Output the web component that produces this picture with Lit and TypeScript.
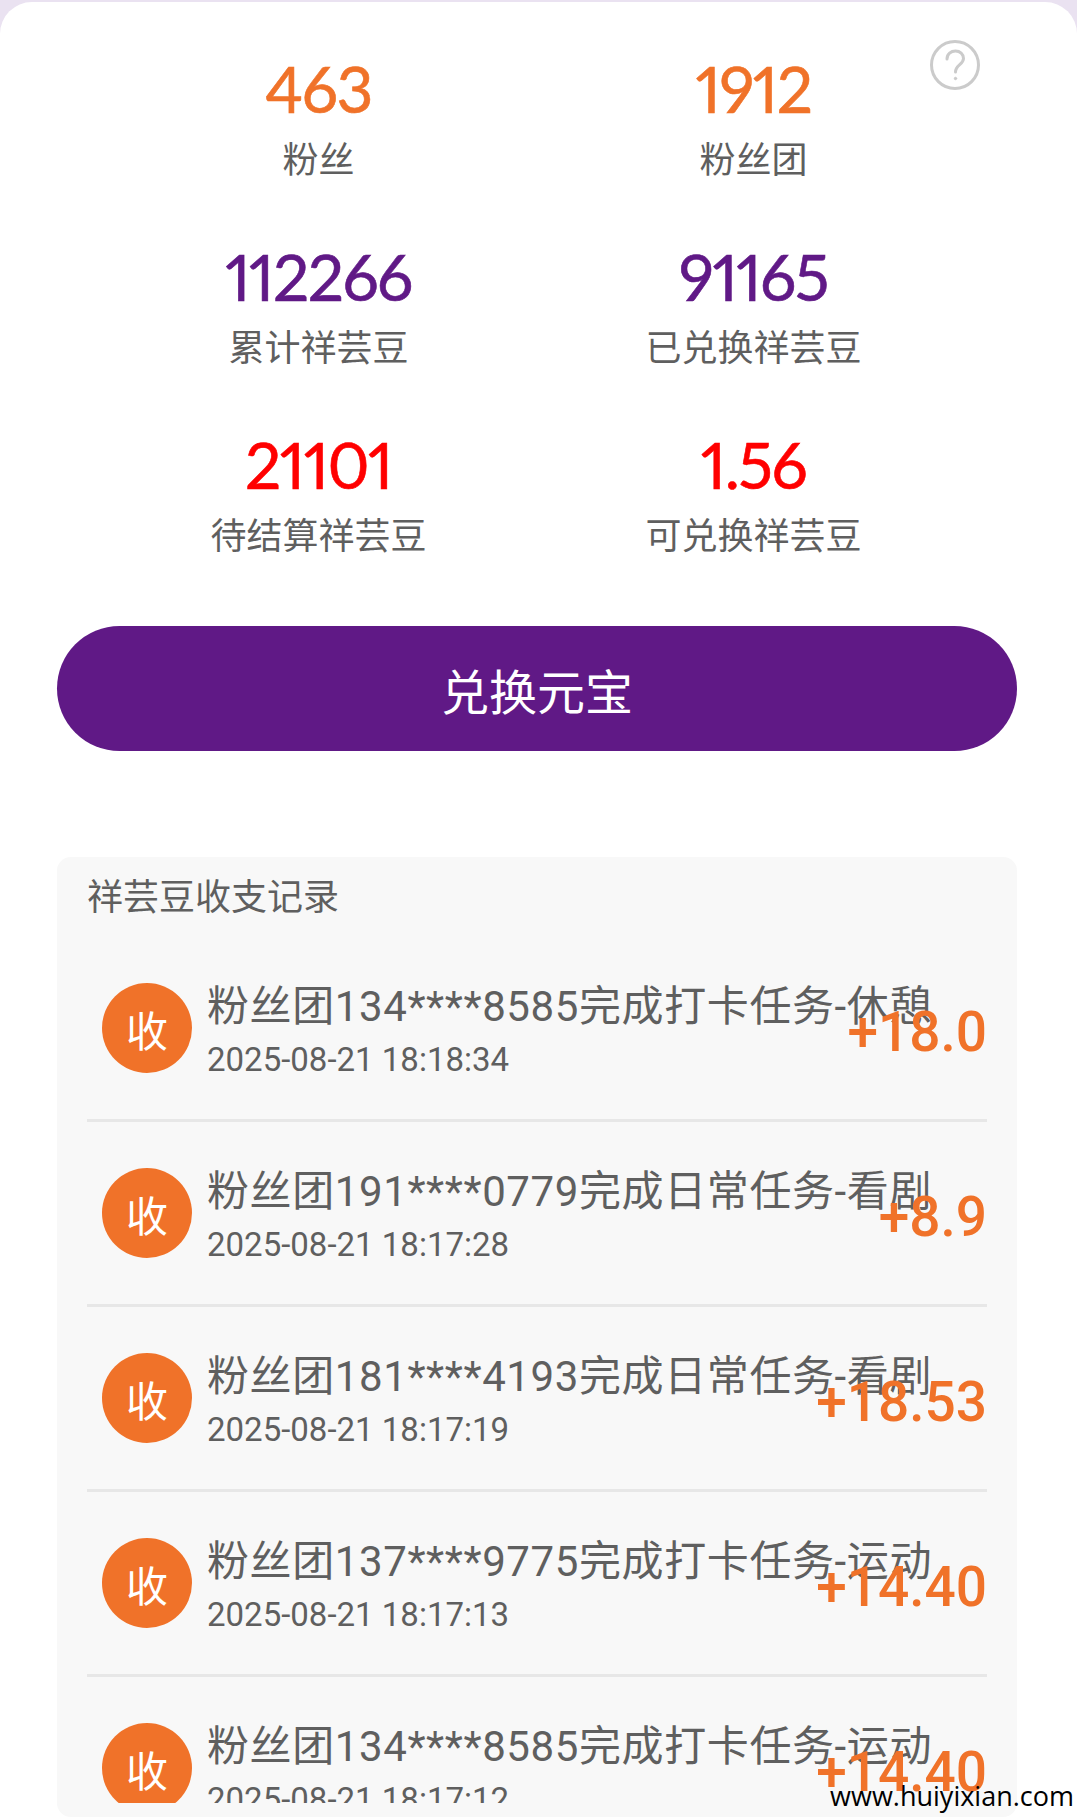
import { LitElement, html, css } from "lit";
import { customElement } from "lit/decorators.js";

const stats = [
  ["463", "粉丝", "o"], ["1912", "粉丝团", "o"],
  ["112266", "累计祥芸豆", "p"], ["91165", "已兑换祥芸豆", "p"],
  ["21101", "待结算祥芸豆", "r"], ["1.56", "可兑换祥芸豆", "r"],
];
const rows = [
  ["粉丝团134****8585完成打卡任务-休憩", "2025-08-21 18:18:34", "+18.0"],
  ["粉丝团191****0779完成日常任务-看剧", "2025-08-21 18:17:28", "+8.9"],
  ["粉丝团181****4193完成日常任务-看剧", "2025-08-21 18:17:19", "+18.53"],
  ["粉丝团137****9775完成打卡任务-运动", "2025-08-21 18:17:13", "+14.40"],
  ["粉丝团134****8585完成打卡任务-运动", "2025-08-21 18:17:12", "+14.40"],
];

@customElement("app-root")
export class AppRoot extends LitElement {
  static styles = css`
    :host { display: block; width: 1077px; height: 1817px; overflow: hidden; position: relative; background: #eae2f1; font-family: Roboto, "Noto Sans CJK SC", sans-serif; color: #5f5f5f; }
    .card { margin-top: 2px; height: 1815px; box-sizing: border-box; background: #fff; border-radius: 32px 32px 0 0; padding: 0 60px 0 57px; position: relative; }
    .help { position: absolute; left: 929px; top: 37px; width: 52px; height: 52px; }
    .stats { display: grid; grid-template-columns: 435px 435px; justify-content: start; padding: 45px 0 0 44px; }
    .stat { height: 188px; display: flex; flex-direction: column; align-items: center; }
    .num { font-family: Lato, sans-serif; font-size: 64px; line-height: 84px; font-weight: 400; font-variant-numeric: proportional-nums; letter-spacing: -1.5px; -webkit-text-stroke: 0.6px currentColor; }
    .o { color: #f07229; } .p { color: #601986; } .r { color: #ff0000; }
    .lbl { font-size: 36px; line-height: 46px; margin-top: 7px; }
    .btn { margin-top: 15px; height: 125px; border-radius: 63px; background: #601986; color: #fff; font-size: 48px; display: flex; align-items: center; justify-content: center; }
    .panel { margin-top: 106px; height: 960px; background: #f8f8f8; border-radius: 14px; box-sizing: border-box; padding: 17px 30px 0; }
    .head { font-size: 36px; line-height: 48px; }
    .list { height: 866px; overflow: hidden; margin-top: 15px; }
    .row { height: 182px; border-bottom: 3px solid #e7e7e7; display: flex; align-items: center; gap: 15px; position: relative; padding-left: 15px; }
    .dot { width: 90px; height: 90px; border-radius: 50%; background: #f07229; color: #fff; font-size: 42px; display: flex; align-items: center; justify-content: center; flex: none; }
    .txt { white-space: nowrap; margin-top: 5px; }
    .t { font-size: 42px; line-height: 58px; letter-spacing: 0.6px; }
    .d { font-size: 33px; line-height: 48px; }
    .amt { position: absolute; right: 0; top: 58px; font-size: 55px; font-weight: 500; line-height: 74px; color: #f07229; }
    .wm { position: absolute; right: 3px; bottom: 3px; font-family: "Open Sans", sans-serif; font-size: 27px; line-height: 36px; color: #000; }
  `;
  render() {
    return html`<div class="card">
      <svg class="help" viewBox="0 0 52 52" fill="none" stroke="#cbcbcb" stroke-width="3" stroke-linecap="round">
        <circle cx="26" cy="26" r="23.500"/>
        <path d="M18 20c0-5 4-8 8.500-8s8 3 8 7.500c0 6-8 6.500-8 13.500"/>
        <circle cx="26.500" cy="39.500" r="1.200" fill="#cbcbcb" stroke-width="1"/>
      </svg>
      <div class="stats">
        ${stats.map(s => html`<div class="stat"><div class="num ${s[2]}">${s[0]}</div><div class="lbl">${s[1]}</div></div>`)}
      </div>
      <div class="btn">兑换元宝</div>
      <div class="panel">
        <div class="head">祥芸豆收支记录</div>
        <div class="list">
          ${rows.map(r => html`<div class="row"><div class="dot">收</div><div class="txt"><div class="t">${r[0]}</div><div class="d">${r[1]}</div></div><div class="amt">${r[2]}</div></div>`)}
        </div>
      </div>
    </div>
    <div class="wm">www.huiyixian.com</div>`;
  }
}
